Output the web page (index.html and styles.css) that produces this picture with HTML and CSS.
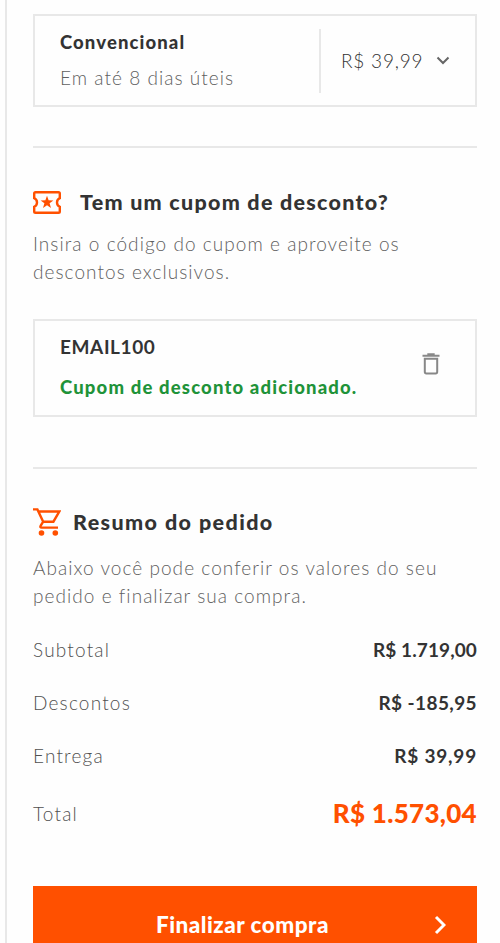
FILE: index.html
```html
<!DOCTYPE html>
<html lang="pt-BR">
<head>
    <meta charset="UTF-8">
    <meta name="viewport" content="width=device-width, initial-scale=1.0">
    <title>Finalizar compra</title>
    <link rel="stylesheet" href="styles.css">
</head>
<body>
    <main class="checkout">
        <!-- Shipping option -->
        <section class="shipping">
            <div class="shipping-info">
                <strong class="shipping-name">Convencional</strong>
                <span class="shipping-time">Em até 8 dias úteis</span>
            </div>
            <div class="shipping-price">
                <span>R$ 39,99</span>
                <svg class="icon-down" viewBox="0 0 14 9"><path d="M1.5 1.5 7 7l5.5-5.5"/></svg>
            </div>
        </section>

        <!-- Coupon -->
        <section class="coupon">
            <h2 class="title coupon-title">
                <svg class="icon-ticket" viewBox="0 0 28 23">
                    <path class="outline" d="M2.5 1.3h23q1.3 0 1.3 1.3v4.6a4.7 4.7 0 0 0 0 8.6v4.6q0 1.3-1.3 1.3h-23q-1.3 0-1.3-1.3v-4.6a4.7 4.7 0 0 0 0-8.6V2.6q0-1.3 1.3-1.3z"/>
                    <path class="star" d="M14 4.8l1.6 4.5 4.8.1-3.8 2.9 1.4 4.6-4-2.7-4 2.7 1.4-4.6-3.8-2.9 4.8-.1z"/>
                </svg>
                <span>Tem um cupom de desconto?</span>
            </h2>
            <p class="text">Insira o código do cupom e aproveite os<br>descontos exclusivos.</p>
            <div class="coupon-card">
                <div class="coupon-info">
                    <strong class="coupon-code">EMAIL100</strong>
                    <span class="coupon-message">Cupom de desconto adicionado.</span>
                </div>
                <svg class="icon-trash" viewBox="0 0 18 22">
                    <path d="M.5 2.7h17M5.3 1.3h7.4M2.8 5.8h12.4v13q0 1.6-1.6 1.6H4.4q-1.6 0-1.6-1.6z"/>
                </svg>
            </div>
        </section>

        <!-- Order summary -->
        <section class="summary">
            <h2 class="title summary-title">
                <svg class="icon-cart" viewBox="0 0 28 28">
                    <path d="M0 1.4h4.4l5.8 12.3h10.2l5.9-10.2H5.5M10.2 13.7l-2.6 4.2q-.8 1.7 1 1.7H25"/>
                    <circle cx="8.5" cy="25" r="2.8"/>
                    <circle cx="22.3" cy="25" r="2.8"/>
                </svg>
                <span>Resumo do pedido</span>
            </h2>
            <p class="text">Abaixo você pode conferir os valores do seu<br>pedido e finalizar sua compra.</p>
            <dl class="totals">
                <div class="row"><dt>Subtotal</dt><dd>R$ 1.719,00</dd></div>
                <div class="row row-discount"><dt>Descontos</dt><dd>R$ -185,95</dd></div>
                <div class="row row-shipping"><dt>Entrega</dt><dd>R$ 39,99</dd></div>
                <div class="row row-total"><dt>Total</dt><dd>R$ 1.573,04</dd></div>
            </dl>
        </section>

        <button class="btn">
            <span>Finalizar compra</span>
            <svg class="icon-next" viewBox="0 0 12 20"><path d="M2 2l8 8-8 8"/></svg>
        </button>
    </main>
</body>
</html>
```

FILE: styles.css
```css
* {
    box-sizing: border-box;
}

body {
    margin: 0;
    height: 943px;
    overflow: hidden;
    background: #fefefe;
    color: #333;
    font-family: Lato, "Open Sans", sans-serif;
    font-size: 19px;
}

/* Sidebar column */
.checkout {
    height: 943px;
    margin-left: 5px;
    padding: 14px 23px 0 26px;
    border-left: 2px solid #e8e8e8;
    overflow: hidden;
}

svg {
    flex: none;
    fill: none;
    stroke: currentColor;
}

/* Shipping card */
.shipping {
    display: flex;
    align-items: center;
    height: 93px;
    padding-left: 25px;
    border: 2px solid #e8e8e8;
}

.shipping-info,
.coupon-info {
    display: flex;
    flex-direction: column;
    flex: 1;
}

.shipping-info {
    margin-top: -2px;
}

.shipping-name {
    line-height: 36px;
    font-size: 18.5px;
    font-weight: 900;
    letter-spacing: 1.1px;
}

.shipping-time {
    line-height: 36px;
    font-weight: 300;
    letter-spacing: 1.05px;
    color: #606060;
}

.shipping-price {
    display: flex;
    align-items: center;
    gap: 13px;
    width: 156px;
    height: 64px;
    padding-left: 20px;
    border-left: 2px solid #e8e8e8;
    font-weight: 300;
    letter-spacing: 0.8px;
    color: #333;
}

.icon-down {
    width: 14px;
    height: 9px;
    color: #666;
    stroke-width: 2;
}

/* Sections */
.coupon,
.summary {
    border-top: 2px solid #e8e8e8;
}

.coupon {
    margin-top: 39px;
    padding-top: 37px;
}

.summary {
    margin-top: 50px;
    padding-top: 36px;
}

.title {
    display: flex;
    align-items: center;
    height: 36px;
    margin: 0;
    font-size: 21.5px;
    font-weight: 900;
    letter-spacing: 1.25px;
}

.title span {
    margin-top: -2px;
}

.coupon-title {
    gap: 19px;
}

.coupon-title span {
    margin-top: -3px;
}

.coupon-title .icon-ticket {
    margin-top: -1px;
}

.summary-title {
    gap: 12px;
    letter-spacing: 1.4px;
}

.text {
    margin: 0;
    line-height: 28px;
    font-weight: 300;
    letter-spacing: 1.05px;
    color: #606060;
}

.coupon .text {
    margin-top: 9px;
}

.summary .text {
    margin-top: 13px;
}

.icon-ticket,
.icon-cart {
    width: 28px;
    color: #ff5000;
    stroke-width: 2.4;
}

.icon-ticket {
    height: 23px;
}

.icon-ticket .star {
    fill: currentColor;
    stroke: none;
}

.icon-cart {
    height: 28px;
    margin-top: -2px;
}

.icon-cart circle {
    fill: currentColor;
    stroke: none;
}

/* Applied coupon */
.coupon-card {
    display: flex;
    align-items: center;
    height: 98px;
    margin-top: 33px;
    padding: 0 35px 0 25px;
    border: 2px solid #e8e8e8;
}

.coupon-code {
    line-height: 40px;
    letter-spacing: 0.6px;
}

.coupon-message {
    line-height: 40px;
    font-size: 18.5px;
    font-weight: 900;
    letter-spacing: 1.15px;
    color: #1f9339;
}

.coupon-info {
    margin-top: -2px;
}

.icon-trash {
    width: 18px;
    height: 22px;
    margin-top: -8px;
    color: #888;
    stroke-width: 2;
}

/* Order values */
.totals {
    margin: 13px 0 0;
}

.row {
    display: flex;
    align-items: center;
    justify-content: space-between;
    height: 53px;
}

.row dt {
    font-weight: 300;
    letter-spacing: 1.2px;
    color: #505050;
}

.row dd {
    margin: 0;
    font-weight: 700;
    letter-spacing: 0.1px;
}

.row-discount dd {
    letter-spacing: 0.4px;
}

.row-shipping dd {
    letter-spacing: 0.8px;
}

.row-total {
    height: 62px;
}

.row-total dd {
    font-size: 26px;
    font-weight: 900;
    letter-spacing: 0.3px;
    color: #ff5000;
}

/* Checkout button */
.btn {
    display: flex;
    align-items: center;
    justify-content: flex-end;
    gap: 105px;
    width: 100%;
    height: 78px;
    margin-top: 42px;
    padding: 0 31px;
    border: 0;
    background: #ff5000;
    color: #fff;
    font-family: inherit;
    font-size: 22.5px;
    font-weight: 900;
    letter-spacing: 0.5px;
    cursor: pointer;
}

.btn span {
    margin-top: -2px;
}

.icon-next {
    width: 12px;
    height: 20px;
    stroke-width: 3;
}
```
